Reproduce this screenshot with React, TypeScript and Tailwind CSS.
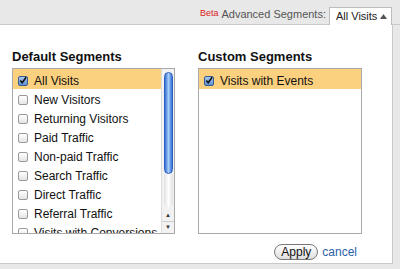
import React from "react";

const defaults = [
  "All Visits",
  "New Visitors",
  "Returning Visitors",
  "Paid Traffic",
  "Non-paid Traffic",
  "Search Traffic",
  "Direct Traffic",
  "Referral Traffic",
  "Visits with Conversions",
];

const Check: React.FC<{ checked?: boolean }> = ({ checked }) =>
  checked ? (
    <span className="w-[10px] h-[10px] shrink-0 rounded-[2px] border border-[#3b5a8c] bg-gradient-to-b from-[#a9c8ee] to-[#5c8fd6] flex items-center justify-center">
      <svg width="9" height="9" viewBox="0 0 9 9">
        <path d="M1.5 4.5 L3.6 7 L8 0.8" fill="none" stroke="#111" strokeWidth="1.8" />
      </svg>
    </span>
  ) : (
    <span className="w-[10px] h-[10px] shrink-0 rounded-[2px] border border-[#9a9a9a] bg-gradient-to-b from-white to-[#e4e4e4]" />
  );

const Row: React.FC<{ label: string; active?: boolean }> = ({ label, active }) => (
  <div
    className={`flex items-center gap-[6px] pl-[5px] pt-[3px] shrink-0 ${
      active ? "bg-[#fbd07e] h-[20px]" : "h-[19px]"
    }`}
  >
    <Check checked={active} />
    <span className="text-[12px] text-[#111] whitespace-nowrap">{label}</span>
  </div>
);

export default function App() {
  return (
    <div
      className="w-[400px] h-[269px] bg-[#e8e8e8] flex flex-col overflow-hidden"
      style={{ fontFamily: '"Liberation Sans", Arial, sans-serif' }}
    >
      <div className="h-[25px] flex items-end justify-end pr-[8px] border-b border-[#c9c9c9] shrink-0">
        <div className="flex items-center gap-[3px] h-[17px] mr-[3px] mb-[1px]">
          <span className="text-[9px] text-[#d22] mt-[-1px]">Beta</span>
          <span className="text-[11px] text-[#555]">Advanced Segments:</span>
        </div>
        <div className="w-[63px] h-[18px] bg-white border border-[#bdbdbd] border-b-0 flex items-center gap-[3px] pl-[6px] mb-[-1px] relative z-10 whitespace-nowrap">
          <span className="text-[11px] text-[#222]">All Visits</span>
          <svg width="7" height="5" viewBox="0 0 7 5">
            <path d="M0 5 L3.5 0 L7 5 Z" fill="#555" />
          </svg>
        </div>
      </div>
      <div className="w-[393px] h-[239px] bg-white border-r border-b border-[#c9c9c9] flex gap-[23px] pl-[12px] pt-[16px] shrink-0">
        <div className="flex flex-col">
          <div className="text-[13px] font-bold text-[#111] h-[27px] pt-[6px]">Default Segments</div>
          <div className="w-[163px] h-[166px] border border-[#a9a9a9] flex overflow-hidden">
            <div className="flex-1 flex flex-col overflow-hidden">
              {defaults.map((d, i) => (
                <Row key={d} label={d} active={i === 0} />
              ))}
            </div>
            <div className="w-[13px] flex flex-col items-center bg-[#f2f2f2] border-l border-[#dcdcdc]">
              <div className="w-[9px] h-[102px] mt-[3px] rounded-full border border-[#2c5fbf] bg-gradient-to-r from-[#3570d4] via-[#a8cdf8] to-[#3570d4]" />
              <div className="w-[9px] flex-1 rounded-b-full bg-gradient-to-r from-[#e0e0e0] via-white to-[#e0e0e0] mb-[2px]" />
              <div className="h-[12px] flex items-center text-[6px] text-[#333]">▲</div>
              <div className="h-[12px] flex items-center text-[6px] text-[#333] border-t border-[#ccc] w-full justify-center">▼</div>
            </div>
          </div>
        </div>
        <div className="flex flex-col">
          <div className="text-[13px] font-bold text-[#111] h-[27px] pt-[6px]">Custom Segments</div>
          <div className="w-[164px] h-[166px] border border-[#a9a9a9] flex flex-col">
            <Row label="Visits with Events" active />
          </div>
          <div className="flex items-center justify-end gap-[4px] mt-[9px] mr-[5px]">
            <button className="h-[16px] px-[6px] rounded-full border border-[#777] bg-gradient-to-b from-white to-[#dedede] text-[12px] text-[#111] leading-none">
              Apply
            </button>
            <a className="text-[12px] text-[#2a5ea8]">cancel</a>
          </div>
        </div>
      </div>
    </div>
  );
}
